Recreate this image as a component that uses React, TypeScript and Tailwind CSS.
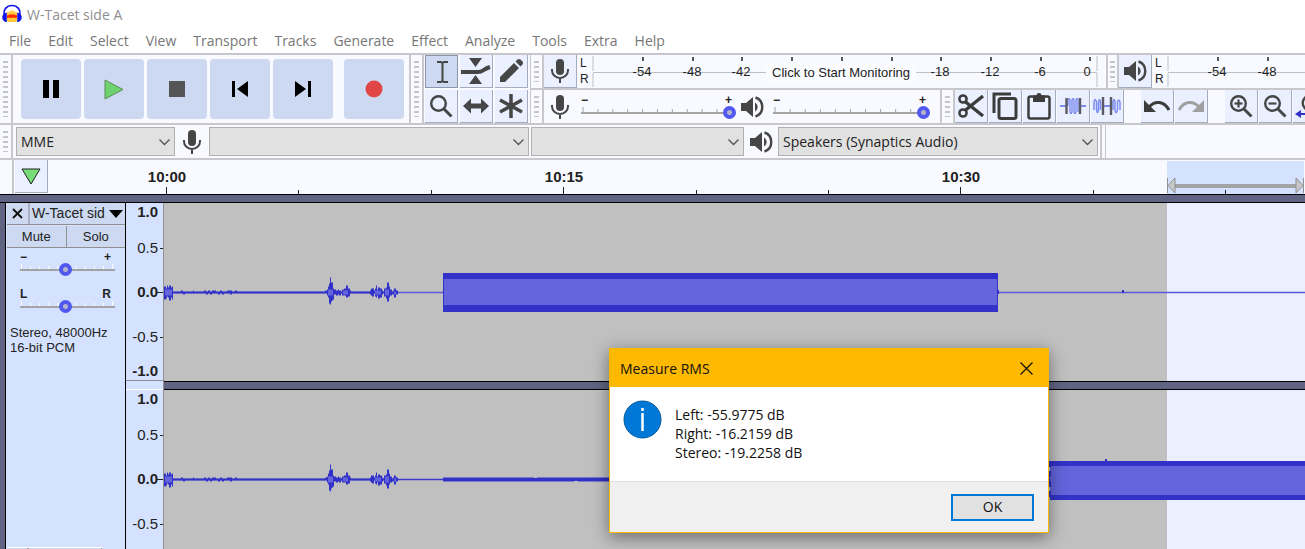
import React from "react";

const ui = "font-['Open_Sans','Noto_Sans',sans-serif]";
const arial = "font-['Liberation_Sans',Arial,sans-serif]";

const menus = ["File", "Edit", "Select", "View", "Transport", "Tracks", "Generate", "Effect", "Analyze", "Tools", "Extra", "Help"];

type IconProps = { className?: string };

const AppLogo = () => (
  <svg width="20" height="20" viewBox="0 0 20 20" aria-hidden="true">
    <path d="M5 17V9l1-2 1 2 1-3 1 2 1-3 1 3 1-2 1 3 1-2 1 2v8l-1 1H6z" fill="#ffc83c" />
    <path d="M5 11.500l2-.5 2-1 1 1 2-1 1 1 2 .5v2l-2 .5-2-.5-2 .5-2-.5-2 .5z" fill="#ff2a00" />
    <path d="M2.300 12C1 5 5 1.500 10 1.500S19 5 17.700 12" fill="none" stroke="#1414e6" strokeWidth="1.600" />
    <path d="M4.800 8.500v9.500H3.500C1 17 0 15 .3 12.500S3 9 4.800 8.500zM15.200 8.500v9.500h1.300c2.500-1 3.500-3 3.200-5.500S17 9 15.200 8.500z" fill="#1414e6" />
  </svg>
);

const MicIcon = ({ className }: IconProps) => (
  <svg className={className} width="20" height="26" viewBox="0 0 20 26" aria-hidden="true">
    <rect x="6" y="1" width="8" height="16" rx="4" fill="#464646" />
    <path d="M2 11v1.500a8 7.500 0 0 0 16 0V11M10 20v5" fill="none" stroke="#464646" strokeWidth="2" />
  </svg>
);

const SpeakerIcon = ({ className }: IconProps) => (
  <svg className={className} width="24" height="22" viewBox="0 0 24 22" aria-hidden="true">
    <path d="M1 7h5l7-6v20l-7-6H1z" fill="#464646" />
    <path d="M15 6.500c3.500 2 3.500 7 0 9z" fill="#464646" />
    <path d="M15.500 1.500c9 3 9 16 0 19" fill="none" stroke="#464646" strokeWidth="2.400" />
  </svg>
);

const BeamIcon = () => (
  <svg width="26" height="26" viewBox="0 0 26 26" aria-hidden="true">
    <path d="M8 3h4l1.500 1L15 3h4M8 23h4l1.500-1 1.500 1h4M13.500 4v18" fill="none" stroke="#464646" strokeWidth="2" />
  </svg>
);

const EnvelopeIcon = () => (
  <svg width="32" height="26" viewBox="0 0 32 26" aria-hidden="true">
    <path d="M9 0h13l-6.500 9zM9 26h13l-6.500-9z" fill="#464646" />
    <path d="M1 14h17c5 0 5-3 12-5" fill="none" stroke="#464646" strokeWidth="4" />
  </svg>
);

const PencilIcon = () => (
  <svg width="26" height="26" viewBox="0 0 26 26" aria-hidden="true">
    <path d="M2 24v-5L16 5l5 5L7 24zM17.500 3.500l2-2q1.500-1 3 0l2 2q1 1.500 0 3l-2 2z" fill="#464646" />
  </svg>
);

const MagnifierIcon = ({ sign }: { sign?: "+" | "-" }) => (
  <svg width="25" height="25" viewBox="0 0 25 25" aria-hidden="true">
    <circle cx="9.500" cy="9.500" r="7.300" fill="none" stroke="#464646" strokeWidth="2.400" />
    <path d="M14.500 14.500l8 8" stroke="#464646" strokeWidth="3" />
    {sign && <path d="M5.500 9.500h8" stroke="#464646" strokeWidth="2.200" />}
    {sign === "+" && <path d="M9.500 5.500v8" stroke="#464646" strokeWidth="2.200" />}
  </svg>
);

const ShiftIcon = () => (
  <svg width="26" height="16" viewBox="0 0 26 16" aria-hidden="true">
    <path d="M0 8l8-7.500v5h10v-5L26 8l-8 7.500v-5H8v5z" fill="#464646" />
  </svg>
);

const StarIcon = () => (
  <svg width="26" height="26" viewBox="0 0 26 26" aria-hidden="true">
    <path d="M13 1v24M2 7l22 12M24 7L2 19" stroke="#464646" strokeWidth="3.500" />
  </svg>
);

const CutIcon = () => (
  <svg width="28" height="28" viewBox="0 0 28 28" aria-hidden="true">
    <path d="M8 9.500L26 24M8 18.500L26 4" stroke="#3c3c3c" strokeWidth="3.400" />
    <circle cx="6" cy="7" r="3.600" fill="none" stroke="#3c3c3c" strokeWidth="2.500" />
    <circle cx="6" cy="21" r="3.600" fill="none" stroke="#3c3c3c" strokeWidth="2.500" />
  </svg>
);

const CopyIcon = () => (
  <svg width="28" height="28" viewBox="0 0 28 28" aria-hidden="true">
    <path d="M3 21V2h17" fill="none" stroke="#3c3c3c" strokeWidth="3" />
    <rect x="8" y="6.500" width="17" height="20" rx="2" fill="none" stroke="#3c3c3c" strokeWidth="3" />
  </svg>
);

const PasteIcon = () => (
  <svg width="28" height="28" viewBox="0 0 28 28" aria-hidden="true">
    <rect x="3.500" y="4.500" width="21" height="22" rx="2" fill="none" stroke="#3c3c3c" strokeWidth="2.500" />
    <path d="M8 3.500h3.500a2.500 2.500 0 0 1 5 0H20V10H8z" fill="#3c3c3c" />
  </svg>
);

const TrimIcon = () => (
  <svg width="26" height="20" viewBox="0 0 26 20" aria-hidden="true">
    <path d="M0 10h6M20 10h6" stroke="#7d8cf0" strokeWidth="2" />
    <path d="M8 10V4q1-3 2 0v12q1 3 2 0V4q1-3 2 0v12q1 3 2 0V4q1-3 2 0v12" fill="none" stroke="#7d8cf0" strokeWidth="1.400" />
    <path d="M6.500 2v16M20 2v16" stroke="#5a5a64" strokeWidth="2.400" />
  </svg>
);

const SilenceIcon = () => (
  <svg width="28" height="20" viewBox="0 0 28 20" aria-hidden="true">
    <path d="M1 14V6q1-5 2.500 0v8q1 5 2 0V6q1-5 2 0v8M20 14V6q1-5 2 0v8q1 5 2.500 0V6q1-4 2.500 0v8" fill="none" stroke="#7d8cf0" strokeWidth="1.500" />
    <path d="M10 10h8" stroke="#7d8cf0" strokeWidth="2" />
    <path d="M10 1v18M18 1v18" stroke="#5a5a64" strokeWidth="2.400" />
  </svg>
);

const UndoIcon = ({ className }: IconProps) => (
  <svg className={className} width="26" height="14" viewBox="0 0 26 14" aria-hidden="true">
    <path d="M0 1v12h12z" fill="currentColor" />
    <path d="M5 8C11 1 20 2 25 11" fill="none" stroke="currentColor" strokeWidth="3" />
  </svg>
);

const FitIcon = () => (
  <svg width="29" height="25" viewBox="0 0 29 25" aria-hidden="true">
    <circle cx="15" cy="9" r="7.300" fill="none" stroke="#464646" strokeWidth="2.400" />
    <path d="M0 20l6-4v3h8v2H6v3z" fill="#3232c8" />
  </svg>
);

const Grip = ({ className = "" }: IconProps) => (
  <div className={`flex w-[13px] shrink-0 items-center justify-center border-r-2 border-[#c8c8cc] py-[6px] ${className}`}>
    <div className="h-full w-[5px] bg-[repeating-linear-gradient(to_bottom,#c6c6ca_0px,#c6c6ca_2px,transparent_2px,transparent_5px)]" />
  </div>
);

interface ToolButtonProps {
  label: string;
  pressed?: boolean;
  children: React.ReactNode;
}

const ToolButton = ({ label, pressed, children }: ToolButtonProps) => (
  <button
    type="button"
    aria-label={label}
    className={`flex h-[33px] w-[33px] shrink-0 items-center justify-center overflow-hidden border-r border-b ${
      pressed ? "border-t border-l border-[#8c96aa] bg-[#cdd9f0]" : "border-[#a4acbc] bg-[#eaf0ff]"
    }`}
  >
    {children}
  </button>
);

const TransportButton = ({ label, children }: ToolButtonProps) => (
  <button type="button" aria-label={label} className="flex h-[60px] w-[60px] shrink-0 items-center justify-center rounded bg-[#cdd9f0]">
    {children}
  </button>
);

const recordMarks = [-54, -48, -42, -36, -30, -24, -18, -12, -6, 0];
const playMarks = [-54, -48];

interface MeterProps {
  marks: number[];
  hint?: string;
  className?: string;
}

const Meter = ({ marks, hint, className = "" }: MeterProps) => (
  <div className={`flex h-[33px] min-w-0 ${className}`}>
    <div className={`flex w-[15px] shrink-0 flex-col pl-[3px] text-[12px] leading-[16px] text-[#222] ${arial}`}>
      <span>L</span>
      <span>R</span>
    </div>
    <svg className="h-full w-full min-w-0" aria-hidden="true">
      <path d="M1 1v15M1 18v14M1 17.500h504M505 1v15M505 18v14" stroke="#c0c0c4" strokeWidth="1" fill="none" />
      {marks.map((db, i) => {
        const x = Math.round(51 + i * 49.7);
        const hidden = hint && db < -18 && db > -42;
        return (
          <g key={db}>
            <path d={`M${x} 2v4`} stroke="#222" strokeWidth="1.500" />
            {!hidden && (
              <text x={db === 0 ? x - 3 : x - 1} y="21" textAnchor="middle" fontSize="13" fill="#222" fontFamily="Liberation Sans, Arial, sans-serif">
                {db}
              </text>
            )}
          </g>
        );
      })}
      {hint && (
        <>
          <rect x="174" y="8" width="150" height="19" fill="#fbfcff" />
          <text x="249" y="22" textAnchor="middle" fontSize="13" fill="#222" fontFamily="Liberation Sans, Arial, sans-serif">
            {hint}
          </text>
        </>
      )}
    </svg>
  </div>
);

interface SliderProps {
  label: string;
  low: string;
  high: string;
  value: number;
  tick: string;
  className?: string;
}

const Slider = ({ label, low, high, value, tick, className = "" }: SliderProps) => (
  <label className={`relative block ${className}`}>
    <span className={`flex justify-between text-[12px] leading-[12px] font-bold text-[#222] ${arial}`}>
      <span>{low}</span>
      <span className="pr-1">{high}</span>
    </span>
    <svg className="block h-[13px] w-full" aria-hidden="true">
      <rect y="6" width="100%" height="2" fill="#a4a4a4" />
      {Array.from({ length: 11 }, (_, i) => (
        <rect key={i} x={`${1 + i * 9.6}%`} y={i % 10 === 0 ? 1 : 3} width="1" height={i % 10 === 0 ? 5 : 3} fill={tick} />
      ))}
    </svg>
    <input
      type="range"
      aria-label={label}
      defaultValue={value}
      className="absolute bottom-0 left-0 h-[13px] w-full appearance-none bg-transparent [&::-webkit-slider-thumb]:h-[13px] [&::-webkit-slider-thumb]:w-[13px] [&::-webkit-slider-thumb]:appearance-none [&::-webkit-slider-thumb]:rounded-full [&::-webkit-slider-thumb]:border-4 [&::-webkit-slider-thumb]:border-[#5058f0] [&::-webkit-slider-thumb]:bg-[#b4b4c8]"
    />
  </label>
);

const DeviceSelect = ({ label, value, className }: { label: string; value: string; className: string }) => (
  <div className={`relative h-[29px] shrink-0 ${className}`}>
    <select
      aria-label={label}
      defaultValue={value}
      className={`h-full w-full appearance-none border border-[#b0b0b0] bg-[#e1e1e1] pl-[4px] text-[14px] leading-[20px] text-[#222] ${ui}`}
    >
      <option value={value}>{value}</option>
    </select>
    <svg className="pointer-events-none absolute top-[12px] right-[5px]" width="11" height="7" viewBox="0 0 11 7" aria-hidden="true">
      <path d="M.5 .5l5 5 5-5" fill="none" stroke="#555" strokeWidth="1.400" />
    </svg>
  </div>
);

// envelope points: [x, peak above the axis, peak below the axis]
type Peak = [number, number, number];

const speech: Peak[] = [
  [0, 6, 7], [2, 4, 6], [3, 7, 4], [4, 5, 5], [5, 7, 8], [7, 5, 5], [8, 6, 7], [9, 1, 1], [16, 1, 1], [17, 2, 1], [19, 1, 2], [21, 1, 1],
  [26, 1, 1], [29, 2, 1], [30, 1, 1], [38, 1, 1], [40, 2, 1], [42, 1, 2], [44, 2, 1], [46, 1, 2], [48, 2, 1], [52, 1, 1], [54, 1, 2],
  [56, 2, 1], [58, 1, 2], [60, 1, 1], [63, 2, 1], [66, 2, 2], [68, 1, 1], [71, 2, 1], [73, 1, 1], [161, 2, 1], [163, 3, 3], [164, 6, 5],
  [165, 9, 11], [166, 15, 12], [167, 10, 9], [168, 10, 8], [169, 4, 7], [170, 3, 2], [172, 2, 3], [174, 3, 2], [175, 2, 3], [177, 1, 1],
  [178, 3, 3], [180, 4, 3], [182, 7, 5], [184, 4, 4], [186, 2, 1], [187, 1, 1], [206, 2, 2], [207, 4, 3], [208, 4, 4], [210, 2, 1],
  [211, 4, 4], [212, 7, 5], [213, 3, 3], [214, 5, 6], [216, 4, 5], [218, 2, 2], [219, 1, 1], [220, 4, 4], [222, 5, 6], [223, 10, 9],
  [225, 6, 5], [226, 3, 3], [228, 1, 2], [229, 2, 2], [230, 4, 5], [232, 2, 2], [234, 1, 1],
];

const speechPath = (y: number) => {
  const top = speech.map(([x, up]) => `H${x}V${y - up}`).join("");
  const bottom = speech.map(([x, , down]) => `H${x}V${y + down}`).join("");
  return `M0 ${y}${top}V${y}ZM0 ${y}${bottom}V${y}Z`;
};

const Speech = ({ y }: { y: number }) => (
  <>
    <path d={speechPath(y)} fill="#3232c8" />
    <path
      d={`M1 ${y - 3}h7v6H1zM164 ${y - 3}h5v6h-5zM179 ${y - 2}h5v4h-5zM211 ${y - 2}h6v4h-6zM221 ${y - 3}h4v6h-4zM230 ${y - 1}h2v3h-2z`}
      fill="#6464dc"
    />
  </>
);

const SELECTION_END = 1003;

const LeftChannel = () => (
  <svg className="block h-[178px] w-full shrink-0 bg-[#c0c0c0]" role="img" aria-label="Left channel">
    <rect x={SELECTION_END} width="100%" height="100%" fill="#eaf0ff" />
    <path d="M0 89.500h4000" stroke="#5a5ad4" strokeWidth="1.500" />
    <Speech y={89.5} />
    <rect x="279" y="70" width="555" height="39" fill="#3232c8" />
    <rect x="280" y="76" width="553" height="26" fill="#6464dc" />
    <path d="M834 87v4M959 87v3" stroke="#3232c8" strokeWidth="2" />
  </svg>
);

const RightChannel = () => (
  <svg className="block min-h-0 w-full flex-1 bg-[#c0c0c0]" role="img" aria-label="Right channel">
    <rect x={SELECTION_END} width="100%" height="100%" fill="#eaf0ff" />
    <path d="M0 89.500h886" stroke="#3c3ccc" strokeWidth="1.500" />
    <Speech y={89.5} />
    <path d="M279 89.500h607" stroke="#3232c8" strokeWidth="4" />
    <path d="M370 87.500h3M410 91.500h4" stroke="#c0c0c0" strokeWidth="1" />
    <rect x="886" y="71" width="4000" height="39" fill="#3232c8" />
    <rect x="886" y="76" width="4000" height="29" fill="#6464dc" />
    <path d="M886 71v39" stroke="#3232c8" strokeWidth="2" strokeDasharray="6 4" />
    <path d="M942 69v3" stroke="#3232c8" strokeWidth="2" />
  </svg>
);

const levels = [
  { text: "1.0", y: 14, axis: 0 },
  { text: "0.5", y: 50, axis: 45 },
  { text: "0.0", y: 94, axis: 89 },
  { text: "-0.5", y: 139, axis: 134 },
  { text: "-1.0", y: 173, axis: 0 },
];

const LevelScale = ({ className }: IconProps) => (
  <svg className={`block w-full ${className}`} aria-hidden="true">
    {levels.map(({ text, y, axis }) => (
      <g key={text}>
        <text
          x="32"
          y={y}
          textAnchor="end"
          fontSize="15"
          fontWeight={text.includes("5") ? 400 : 700}
          fill="#222"
          fontFamily="Liberation Sans, Arial, sans-serif"
        >
          {text}
        </text>
        {axis > 0 && <path d={`M${text === "0.0" ? 31 : 34} ${axis + 0.5}H38`} stroke="#222" />}
      </g>
    ))}
  </svg>
);

const TimeRuler = () => (
  <svg className="block h-[34px] min-w-0 flex-1" role="img" aria-label="Timeline">
    <rect x="1118" y="1" width="137" height="33" fill="#d5e2ff" />
    {Array.from({ length: 9 }, (_, i) => {
      const x = Math.round(117 + i * 132.4);
      return <path key={i} d={`M${x + 0.5} ${i % 3 === 0 ? 27 : 30}V34`} stroke="#222" />;
    })}
    {["10:00", "10:15", "10:30"].map((time, i) => (
      <text key={time} x={118 + i * 397} y="22" textAnchor="middle" fontSize="15" fontWeight="700" fill="#222" fontFamily="Liberation Sans, Arial, sans-serif">
        {time}
      </text>
    ))}
    <path d="M1126 24h121v4h-121z" fill="#a0a4a4" />
    <path d="M1126 18v15l-7-7.500zM1247 18v15l7-7.500z" fill="#c8c8c8" stroke="#909090" />
    <path d="M1118.500 18v15M1254.500 18v15" stroke="#909090" />
  </svg>
);

const TrackPanel = () => (
  <div className={`flex w-[121px] shrink-0 flex-col border-x border-black bg-[#d5e2ff] pl-px text-[13px] text-[#222] ${arial}`}>
    <div className="flex h-[22px] shrink-0 border-b border-[#909090] bg-[#cdd9f0]">
      <button type="button" aria-label="Close track" className="flex w-[23px] items-center justify-center border-r-2 border-[#a8b0c0]">
        <svg width="11" height="11" viewBox="0 0 11 11" aria-hidden="true">
          <path d="M1 1l9 9M10 1l-9 9" stroke="#111" strokeWidth="1.800" />
        </svg>
      </button>
      <button type="button" className="flex flex-1 items-center justify-between pr-[2px] pl-[2px] text-[14px] whitespace-nowrap">
        W-Tacet sid
        <svg width="14" height="8" viewBox="0 0 14 8" aria-hidden="true">
          <path d="M0 0h14L7 8z" fill="#000" />
        </svg>
      </button>
    </div>
    <div className="mt-px flex h-[22px] shrink-0 border-b border-[#909090] bg-[#cdd9f0]">
      <button type="button" className="flex-1 border-r border-[#909090]">Mute</button>
      <button type="button" className="flex-1">Solo</button>
    </div>
    <Slider label="Gain" low="−" high="+" value={48} tick="#ffffff" className="mt-[3px] mr-[10px] ml-[13px] shrink-0" />
    <Slider label="Pan" low="L" high="R" value={48} tick="#ffffff" className="mt-[12px] mr-[10px] ml-[13px] shrink-0" />
    <p className="mt-[12px] pl-[3px] leading-[15px] whitespace-nowrap">
      Stereo, 48000Hz
      <br />
      16-bit PCM
    </p>
    <div className="mt-auto flex h-[2px] w-[95px] shrink-0 border-t border-white bg-[#cdd9f0]">
      <div className="w-[22px] border-r-2 border-[#a0a0a0]" />
      <div className="flex-1 border-r border-[#a0a0a0]" />
    </div>
  </div>
);

const MeasureDialog = () => (
  <div
    role="dialog"
    aria-labelledby="rms-title"
    className={`absolute top-[348px] left-[609px] w-[440px] border border-[#ffb900] bg-white text-[14px] text-[#111] shadow-[0_4px_16px_rgba(0,0,0,0.45)] ${ui}`}
  >
    <div className="flex h-[38px] items-center justify-between bg-[#ffb900] pr-[15px] pl-[10px]">
      <h2 id="rms-title">Measure RMS</h2>
      <button type="button" aria-label="Close">
        <svg width="13" height="13" viewBox="0 0 13 13" aria-hidden="true">
          <path d="M.5 .5l12 12M12.500 .5l-12 12" stroke="#111" strokeWidth="1.200" />
        </svg>
      </button>
    </div>
    <div className="flex h-[94px] gap-[13px] pt-[13px] pl-[13px]">
      <svg className="shrink-0" width="39" height="39" viewBox="0 0 39 39" aria-hidden="true">
        <circle cx="19.500" cy="19.500" r="18.500" fill="#0078d7" stroke="#005a9e" />
        <path d="M19.500 13v18M19.500 8v3" stroke="#fff" strokeWidth="2.500" />
      </svg>
      <p className="pt-[5px] leading-[19px]">
        Left: -55.9775 dB
        <br />
        Right: -16.2159 dB
        <br />
        Stereo: -19.2258 dB
      </p>
    </div>
    <div className="flex h-[51px] items-center justify-end border-t border-[#dfdfdf] bg-[#f0f0f0] pr-[14px]">
      <button type="button" className="h-[27px] w-[83px] border-2 border-[#0078d7] bg-[#e1e1e1] leading-[20px]">OK</button>
    </div>
  </div>
);

export default function App() {
  return (
    <div className="relative flex h-screen flex-col overflow-hidden bg-[#f8faff]">
      <header className={`shrink-0 bg-white text-[14px] ${ui}`}>
        <div className="flex h-[28px] items-center gap-[5px] pl-[2px] text-[#909090]">
          <AppLogo />
          <h1>W-Tacet side A</h1>
        </div>
        <nav className="flex h-[25px] gap-[17px] pl-[9px] leading-[24px] text-[#777]">
          {menus.map((menu) => (
            <button key={menu} type="button">{menu}</button>
          ))}
        </nav>
      </header>

      <div className="flex h-[72px] shrink-0 border-y-2 border-[#c8c8cc]">
        <Grip />
        <div className="flex w-[398px] shrink-0 items-center gap-[3px] border-r-2 border-[#c8c8cc] pl-[8px]">
          <TransportButton label="Pause">
            <svg width="16" height="18" viewBox="0 0 16 18" aria-hidden="true">
              <path d="M0 0h6v18H0zM10 0h6v18h-6z" fill="#000" />
            </svg>
          </TransportButton>
          <TransportButton label="Play">
            <svg width="20" height="21" viewBox="0 0 20 21" aria-hidden="true">
              <path d="M1 1l18 9.500L1 20z" fill="#6ed26e" stroke="#5a8c5a" />
            </svg>
          </TransportButton>
          <TransportButton label="Stop">
            <svg width="16" height="16" viewBox="0 0 16 16" aria-hidden="true">
              <path d="M0 0h16v16H0z" fill="#555" />
            </svg>
          </TransportButton>
          <TransportButton label="Skip to start">
            <svg width="16" height="16" viewBox="0 0 16 16" aria-hidden="true">
              <path d="M0 0h3v16H0zM16 0v16L5 8z" fill="#000" />
            </svg>
          </TransportButton>
          <TransportButton label="Skip to end">
            <svg width="16" height="16" viewBox="0 0 16 16" aria-hidden="true">
              <path d="M13 0h3v16h-3zM0 0v16l11-8z" fill="#000" />
            </svg>
          </TransportButton>
          <div className="pl-[8px]">
            <TransportButton label="Record">
              <svg width="18" height="18" viewBox="0 0 18 18" aria-hidden="true">
                <circle cx="9" cy="9" r="8.500" fill="#e14646" />
              </svg>
            </TransportButton>
          </div>
        </div>
        <Grip />
        <div className="grid shrink-0 grid-cols-3 gap-[2px] pr-[2px] pl-px">
          <ToolButton label="Selection tool" pressed><BeamIcon /></ToolButton>
          <ToolButton label="Envelope tool"><EnvelopeIcon /></ToolButton>
          <ToolButton label="Draw tool"><PencilIcon /></ToolButton>
          <ToolButton label="Zoom tool"><MagnifierIcon /></ToolButton>
          <ToolButton label="Time shift tool"><ShiftIcon /></ToolButton>
          <ToolButton label="Multi-tool"><StarIcon /></ToolButton>
        </div>
        <div className="flex min-w-0 flex-1 flex-col">
          <div className="flex h-[35px] border-b-2 border-l border-[#c8c8cc]">
            <Grip />
            <ToolButton label="Recording meter"><MicIcon /></ToolButton>
            <Meter marks={recordMarks} hint="Click to Start Monitoring" className="w-[529px] shrink-0" />
            <Grip className="border-l-2" />
            <ToolButton label="Playback meter"><SpeakerIcon /></ToolButton>
            <Meter marks={playMarks} className="flex-1" />
          </div>
          <div className="flex h-[33px] border-l border-[#c8c8cc]">
            <Grip />
            <div className="flex w-[398px] shrink-0 items-center border-r-2 border-[#c8c8cc] pl-[6px]">
              <MicIcon />
              <Slider label="Recording volume" low="−" high="+" value={100} tick="#a4a4a4" className="ml-[11px] w-[155px]" />
              <SpeakerIcon className="ml-[4px]" />
              <Slider label="Playback volume" low="−" high="+" value={100} tick="#a4a4a4" className="ml-[9px] w-[157px]" />
            </div>
            <Grip />
            <div className="flex min-w-0 flex-1 gap-px overflow-hidden">
              <ToolButton label="Cut"><CutIcon /></ToolButton>
              <ToolButton label="Copy"><CopyIcon /></ToolButton>
              <ToolButton label="Paste"><PasteIcon /></ToolButton>
              <ToolButton label="Trim outside selection"><TrimIcon /></ToolButton>
              <ToolButton label="Silence selection"><SilenceIcon /></ToolButton>
              <div className="w-[15px] shrink-0" />
              <ToolButton label="Undo"><UndoIcon className="text-[#3c3c3c]" /></ToolButton>
              <ToolButton label="Redo"><UndoIcon className="-scale-x-100 text-[#a0a0a0]" /></ToolButton>
              <div className="w-[15px] shrink-0" />
              <ToolButton label="Zoom in"><MagnifierIcon sign="+" /></ToolButton>
              <ToolButton label="Zoom out"><MagnifierIcon sign="-" /></ToolButton>
              <ToolButton label="Fit selection"><FitIcon /></ToolButton>
            </div>
          </div>
        </div>
      </div>

      <div className="flex h-[35px] shrink-0 border-b-2 border-[#c8c8cc]">
        <Grip />
        <div className="flex shrink-0 items-center border-r-2 border-[#c8c8cc] pr-[2px] pl-[3px]">
          <DeviceSelect label="Audio host" value="MME" className="w-[159px]" />
          <MicIcon className="mx-[7px]" />
          <DeviceSelect label="Recording device" value="" className="w-[320px]" />
          <DeviceSelect label="Recording channels" value="" className="ml-[2px] w-[213px]" />
          <SpeakerIcon className="mx-[5px]" />
          <DeviceSelect label="Playback device" value="Speakers (Synaptics Audio)" className="w-[320px]" />
        </div>
        <div className="w-[4px] border-r border-[#c8c8cc]" />
      </div>

      <div className="flex h-[35px] shrink-0 border-b border-black">
        <div className="w-[14px] shrink-0 border-r-2 border-[#c8c8cc]" />
        <div className="w-[35px] shrink-0 pl-px">
          <ToolButton label="Pinned play head">
            <svg width="20" height="17" viewBox="0 0 20 17" aria-hidden="true">
              <path d="M1 1h18l-9 15z" fill="#78dc78" stroke="#222" />
            </svg>
          </ToolButton>
        </div>
        <TimeRuler />
      </div>

      <main className="flex min-h-0 flex-1 bg-[#606482] pt-[7px]">
        <div className="flex min-w-0 flex-1 border-t border-black pl-[5px]">
          <TrackPanel />
          <div className="flex w-[38px] shrink-0 flex-col border-r border-[#909090] bg-[#d5e2ff]">
            <LevelScale className="h-[178px] shrink-0 border-b border-[#909090]" />
            <LevelScale className="mt-[8px] min-h-0 flex-1 border-t border-white" />
          </div>
          <div className="flex min-w-0 flex-1 flex-col">
            <LeftChannel />
            <div className="h-[9px] shrink-0 border-y border-black" />
            <RightChannel />
          </div>
        </div>
      </main>

      <MeasureDialog />
    </div>
  );
}
